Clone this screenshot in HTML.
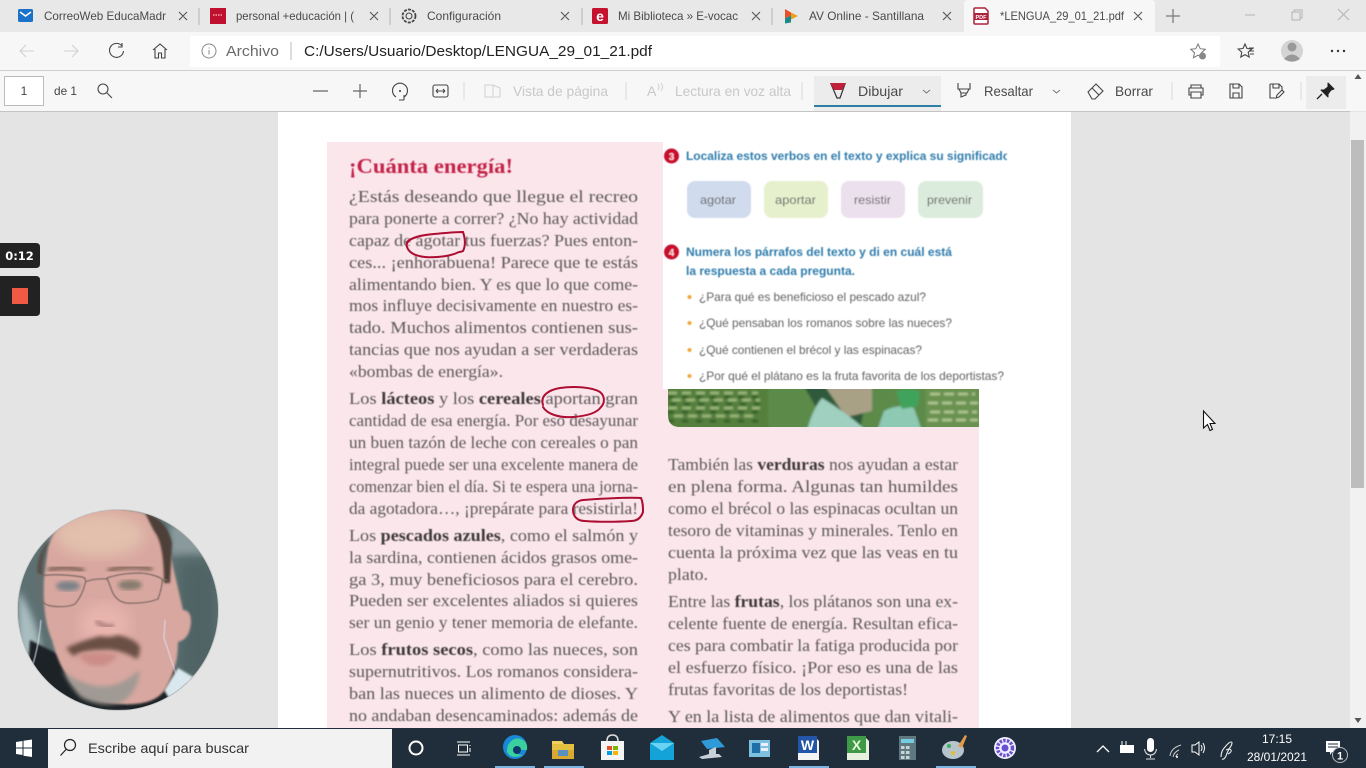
<!DOCTYPE html>
<html lang="es"><head><meta charset="utf-8"><title>LENGUA_29_01_21.pdf</title>
<style>
html,body{margin:0;padding:0;width:1366px;height:768px;overflow:hidden;background:#e4e4e4}
svg{position:absolute;left:0;top:0}
text{font-family:"Liberation Sans",sans-serif}
.ui{font-size:12px;fill:#4a4a4a}
.tb{font-size:14px;fill:#4a4a4a}
.dis{font-size:14px;fill:#c8c8c8}
.s{font-family:"Liberation Serif",serif;font-size:16.5px;fill:#5c5659}
.s tspan{font-weight:bold;fill:#3c383a}
.ti{font-family:"Liberation Serif",serif;font-size:21px;font-weight:bold;fill:#c4224a}
.q{font-size:12px;fill:#626262}
.h{font-size:12px;font-weight:bold;fill:#2f7cab}
.ic{fill:none;stroke:#444;stroke-width:1.1}
.di{fill:none;stroke:#d0d0d0;stroke-width:1.1}
.x{stroke:#555;stroke-width:1.1;fill:none}
</style></head><body>
<svg width="1366" height="768" viewBox="0 0 1366 768" xmlns="http://www.w3.org/2000/svg">
<defs>
<filter id="b0"><feGaussianBlur stdDeviation=".2"/></filter>
<filter id="b1"><feGaussianBlur stdDeviation=".45"/></filter>
<filter id="b1b"><feGaussianBlur stdDeviation="1"/></filter>
<filter id="b2"><feGaussianBlur stdDeviation="2.2"/></filter>
<filter id="b3"><feGaussianBlur stdDeviation="3.5"/></filter>
<filter id="b5"><feGaussianBlur stdDeviation="7"/></filter>
<clipPath id="cc"><circle cx="118" cy="610" r="100"/></clipPath>
<clipPath id="cl"><rect x="660" y="140" width="347" height="30"/></clipPath>
<clipPath id="ph"><path d="M668 389H979V427H680Q668 427 668 415Z"/></clipPath>
<clipPath id="pg"><rect x="278" y="112" width="793" height="616"/></clipPath>
</defs>

<!-- tab strip -->
<rect width="1366" height="32" fill="#e8e8e8"/>
<path d="M964 32V4Q964 0 968 0H1151Q1155 0 1155 4V32Z" fill="#f7f7f7"/>
<g stroke="#b5b5b5"><path d="M199 8V25M390 8V25M582 8V25M772 8V25"/></g>
<!-- tab icons -->
<rect x="18" y="9" width="15" height="13" rx="1.500" fill="#1a73c8"/><path d="M20 12l5.500 4 5.500-4" stroke="#fff" stroke-width="1.600" fill="none"/>
<rect x="210" y="8" width="16" height="16" fill="#c0102f"/><path d="M213 15h10" stroke="#f2a0a8" stroke-width="1.500" stroke-dasharray="1.500 1"/>
<circle cx="409" cy="16" r="3" class="ic"/><circle cx="409" cy="16" r="6.500" fill="none" stroke="#444" stroke-dasharray="3 1.200" stroke-width="1.800"/>
<rect x="592" y="8" width="16" height="16" rx="1.500" fill="#c4122f"/><text x="600" y="21" text-anchor="middle" font-size="14" font-weight="bold" fill="#fff">e</text>
<path d="M785 9l6 3.500v3l-6 3z" fill="#e8522a"/><path d="M791 12.500l7 3.500-7 3.500z" fill="#e6a020"/><path d="M785 18.500l6-3v7l-6 1z" fill="#1a8a8a"/>
<path d="M975 8h10l3 3v12q0 1-1 1h-12q-1 0-1-1V9q0-1 1-1z" fill="#fff" stroke="#b0203a" stroke-width="1.500"/><rect x="974" y="13" width="14" height="7" fill="#b0203a"/><text x="981" y="19" text-anchor="middle" font-size="5.500" font-weight="bold" fill="#fff">PDF</text>
<text class="ui" x="44" y="20" textLength="122" lengthAdjust="spacingAndGlyphs">CorreoWeb EducaMadr</text>
<text class="ui" x="236" y="20" textLength="118" lengthAdjust="spacingAndGlyphs">personal +educación | (</text>
<text class="ui" x="427" y="20" textLength="74" lengthAdjust="spacingAndGlyphs">Configuración</text>
<text class="ui" x="618" y="20" textLength="120" lengthAdjust="spacingAndGlyphs">Mi Biblioteca » E-vocac</text>
<text class="ui" x="809" y="20" textLength="115" lengthAdjust="spacingAndGlyphs">AV Online - Santillana</text>
<text class="ui" x="1000" y="20" textLength="124" lengthAdjust="spacingAndGlyphs">*LENGUA_29_01_21.pdf</text>
<g class="x"><path d="M179 12l8 8M187 12l-8 8M370 12l8 8M378 12l-8 8M561 12l8 8M569 12l-8 8M752 12l8 8M760 12l-8 8M943 12l8 8M951 12l-8 8M1134 12l8 8M1142 12l-8 8"/></g>
<path d="M1173 9v14M1166 16h14" stroke="#777" stroke-width="1.200"/>
<path d="M1245 15h10" stroke="#b5b5b5"/><rect x="1292" y="12" width="8" height="8" fill="none" stroke="#b5b5b5"/><path d="M1294 12v-2h8v8h-2" fill="none" stroke="#b5b5b5"/><path d="M1338 9l11 11M1349 9l-11 11" stroke="#b5b5b5"/>

<!-- address bar -->
<rect y="32" width="1366" height="39" fill="#f7f7f7"/>
<rect x="190" y="36" width="1030" height="31" fill="#fff"/>
<path d="M20 51h14M26 45l-6 6 6 6" class="di"/>
<path d="M64 51h14M72 45l6 6-6 6" class="di"/>
<path d="M122 46a7 7 0 1 0 1.500 5M122 43v4h-4" class="ic"/>
<path d="M153 50l7-6 7 6M155 49v9h3.500v-5h3v5h3.500v-9" class="ic"/>
<circle cx="209" cy="51" r="7" fill="none" stroke="#888"/><path d="M209 47.500v1M209 50v4.500" stroke="#888"/>
<text x="226" y="56" font-size="15" fill="#6a6a6a" textLength="53" lengthAdjust="spacingAndGlyphs">Archivo</text>
<path d="M291 42v18" stroke="#bbb"/>
<text x="304" y="56" font-size="15" fill="#222" textLength="348" lengthAdjust="spacingAndGlyphs">C:/Users/Usuario/Desktop/LENGUA_29_01_21.pdf</text>
<path d="M1198 44l2.200 4.700 5 .6-3.700 3.400 1 5-4.500-2.500-4.500 2.500 1-5-3.700-3.400 5-.6z" fill="none" stroke="#777" stroke-width="1"/><circle cx="1202.500" cy="56" r="3.500" fill="#888"/>
<path d="M1245 44l2 4.500 4.800.5-3.600 3.200 1 4.800-4.200-2.400-4.200 2.400 1-4.800-3.600-3.200 4.800-.5z" class="ic"/><path d="M1249 51h5M1250 54h4M1249 48h5" stroke="#444"/>
<circle cx="1292" cy="51" r="11" fill="#d4d4d4"/><circle cx="1292" cy="47" r="4.500" fill="#999"/><path d="M1284 59q8-9 16 0q-8 5-16 0z" fill="#999"/>
<g fill="#333"><circle cx="1332" cy="51" r="1.200"/><circle cx="1338" cy="51" r="1.200"/><circle cx="1344" cy="51" r="1.200"/></g>
<rect y="70" width="1366" height="1" fill="#cfcfcf"/>

<!-- pdf toolbar -->
<rect y="71" width="1366" height="40" fill="#f7f7f7"/>
<rect y="111" width="1350" height="1" fill="#c4c4c4"/>
<rect x="4.500" y="76.500" width="39" height="29" fill="#fff" stroke="#bbb"/>
<text x="24" y="95" text-anchor="middle" font-size="12" fill="#444">1</text>
<text x="54" y="95" font-size="12" fill="#444" textLength="23" lengthAdjust="spacingAndGlyphs">de 1</text>
<circle cx="103" cy="89" r="5" class="ic"/><path d="M107 93l5 5" class="ic"/>
<path d="M313 91h15M353 91h14M360 84v14" stroke="#666" stroke-width="1.200"/>
<path d="M396 97a7.500 7.500 0 1 1 8 0M404 95v5M399 100h5" class="ic"/><circle cx="400" cy="91" r="1" fill="#333"/>
<rect x="433" y="85" width="15" height="12" rx="2" class="ic"/><path d="M436 91h9M436 91l2-2M436 91l2 2M445 91l-2-2M445 91l-2 2" stroke="#444"/>
<path d="M464 82v18M626 82v18M802 82v18M1172 82v18M1301 82v18" stroke="#d8d8d8"/>
<rect x="485" y="85" width="8" height="12" fill="none" stroke="#d0d0d0"/><path d="M493 85l7 3v9h-7" fill="none" stroke="#d0d0d0"/>
<text class="dis" x="513" y="96" textLength="95" lengthAdjust="spacingAndGlyphs">Vista de página</text>
<text x="647" y="96" font-size="14" fill="#c8c8c8">A</text><path d="M658 84q2 3 0 6M661 83q3 4 0 8" stroke="#d0d0d0" fill="none"/>
<text class="dis" x="675" y="96" textLength="116" lengthAdjust="spacingAndGlyphs">Lectura en voz alta</text>
<rect x="814" y="76" width="127" height="35" fill="#ececec"/><rect x="814" y="105" width="127" height="2" fill="#2f7ea5"/>
<path d="M831 84h14l-5 14h-3z" fill="none" stroke="#333" stroke-width="1.200"/><path d="M830 83h16l-4 7h-8z" fill="#c0203a"/>
<text class="tb" x="858" y="96" textLength="45" lengthAdjust="spacingAndGlyphs">Dibujar</text>
<path d="M923 90l3.500 3 3.500-3" fill="none" stroke="#777"/>
<path d="M958 83v6h12v-6M959 89l2 4h6l2-4M961 93v4l5-2v-2" class="ic"/>
<text class="tb" x="984" y="96" textLength="49" lengthAdjust="spacingAndGlyphs">Resaltar</text>
<path d="M1053 90l3.500 3 3.500-3" fill="none" stroke="#777"/>
<path d="M1088 92l8-8 7 7-8 8h-3z M1092 88l7 7" class="ic"/>
<text class="tb" x="1115" y="96" textLength="38" lengthAdjust="spacingAndGlyphs">Borrar</text>
<path d="M1191 88v-3h10v3M1191 95h-2v-7h14v7h-2M1191 92h10v6h-10z" class="ic"/>
<path d="M1230 84h9l3 3v11h-12zM1233 84v4h6v-4M1233 98v-5h6v5" class="ic"/>
<path d="M1270 84h9l3 3v4M1270 84v14h5M1273 84v4h6v-4M1276 98l1-3 5-5 2 2-5 5z" class="ic"/>
<rect x="1306" y="76" width="40" height="33" fill="#ececec"/>
<path d="M1328 83l6 6-3 1-3 4v3l-7-7h3l4-3z" fill="#222" stroke="#222" stroke-linejoin="round"/><path d="M1322 94l-5 5" stroke="#222" stroke-width="1.300"/>

<!-- pdf page -->
<rect x="278" y="112" width="793" height="616" fill="#fff"/>
<g clip-path="url(#pg)">
<rect x="327" y="142" width="336" height="600" fill="#fbe7eb"/>
<rect x="663" y="389" width="316" height="350" fill="#fbe7eb"/>
<!-- photo -->
<g clip-path="url(#ph)"><g filter="url(#b1b)">
<rect x="664" y="385" width="320" height="46" fill="#5c8a48"/>
<rect x="664" y="385" width="104" height="46" fill="#557f3e"/>
<path d="M668 393h90M672 400h88M668 408h92M674 416h84" stroke="#a2bd7e" stroke-width="2.500" stroke-dasharray="9 5"/>
<path d="M668 397h95M670 404h90M668 412h90M668 421h95" stroke="#2f5a28" stroke-width="2.500" stroke-dasharray="6 8"/>
<path d="M803 385h65l-8 46h-30z" fill="#2d5a3a"/>
<path d="M824 385h48v26l-26 6z" fill="#a9a186"/>
<path d="M822 398q25 15 45 33h-60q5-21 15-33z" fill="#9fd0c0"/>
<path d="M884 411q15-8 30-3l8 23h-45z" fill="#8ec9b4"/>
<path d="M896 392q10-6 24 0l-2 14-16 3z" fill="#3fa35c"/>
<rect x="925" y="385" width="59" height="46" fill="#69914f"/>
<path d="M930 394h45M928 403h50M930 412h47M928 420h50" stroke="#b7cc98" stroke-width="2.500" stroke-dasharray="10 4"/>
</g></g>
<g filter="url(#b1)">
<text class="ti" x="349" y="173" textLength="164" lengthAdjust="spacingAndGlyphs">¡Cuánta energía!</text>
<text class="s" x="349" y="202" textLength="289" lengthAdjust="spacingAndGlyphs">¿Estás deseando que llegue el recreo</text>
<text class="s" x="349" y="224" textLength="289" lengthAdjust="spacingAndGlyphs">para ponerte a correr? ¿No hay actividad</text>
<text class="s" x="349" y="246" textLength="289" lengthAdjust="spacingAndGlyphs">capaz de agotar tus fuerzas? Pues enton-</text>
<text class="s" x="349" y="268" textLength="289" lengthAdjust="spacingAndGlyphs">ces... ¡enhorabuena! Parece que te estás</text>
<text class="s" x="349" y="290" textLength="289" lengthAdjust="spacingAndGlyphs">alimentando bien. Y es que lo que come-</text>
<text class="s" x="349" y="311" textLength="289" lengthAdjust="spacingAndGlyphs">mos influye decisivamente en nuestro es-</text>
<text class="s" x="349" y="333" textLength="289" lengthAdjust="spacingAndGlyphs">tado. Muchos alimentos contienen sus-</text>
<text class="s" x="349" y="355" textLength="289" lengthAdjust="spacingAndGlyphs">tancias que nos ayudan a ser verdaderas</text>
<text class="s" x="349" y="377" textLength="154" lengthAdjust="spacingAndGlyphs">«bombas de energía».</text>
<text class="s" x="349" y="404" textLength="289" lengthAdjust="spacingAndGlyphs">Los <tspan>lácteos</tspan> y los <tspan>cereales</tspan> aportan gran</text>
<text class="s" x="349" y="426" textLength="289" lengthAdjust="spacingAndGlyphs">cantidad de esa energía. Por eso desayunar</text>
<text class="s" x="349" y="448" textLength="289" lengthAdjust="spacingAndGlyphs">un buen tazón de leche con cereales o pan</text>
<text class="s" x="349" y="470" textLength="289" lengthAdjust="spacingAndGlyphs">integral puede ser una excelente manera de</text>
<text class="s" x="349" y="492" textLength="289" lengthAdjust="spacingAndGlyphs">comenzar bien el día. Si te espera una jorna-</text>
<text class="s" x="349" y="514" textLength="289" lengthAdjust="spacingAndGlyphs">da agotadora…, ¡prepárate para resistirla!</text>
<text class="s" x="349" y="541" textLength="289" lengthAdjust="spacingAndGlyphs">Los <tspan>pescados azules</tspan>, como el salmón y</text>
<text class="s" x="349" y="563" textLength="289" lengthAdjust="spacingAndGlyphs">la sardina, contienen ácidos grasos ome-</text>
<text class="s" x="349" y="585" textLength="289" lengthAdjust="spacingAndGlyphs">ga 3, muy beneficiosos para el cerebro.</text>
<text class="s" x="349" y="606" textLength="289" lengthAdjust="spacingAndGlyphs">Pueden ser excelentes aliados si quieres</text>
<text class="s" x="349" y="628" textLength="289" lengthAdjust="spacingAndGlyphs">ser un genio y tener memoria de elefante.</text>
<text class="s" x="349" y="655" textLength="289" lengthAdjust="spacingAndGlyphs">Los <tspan>frutos secos</tspan>, como las nueces, son</text>
<text class="s" x="349" y="677" textLength="289" lengthAdjust="spacingAndGlyphs">supernutritivos. Los romanos considera-</text>
<text class="s" x="349" y="699" textLength="289" lengthAdjust="spacingAndGlyphs">ban las nueces un alimento de dioses. Y</text>
<text class="s" x="349" y="721" textLength="289" lengthAdjust="spacingAndGlyphs">no andaban desencaminados: además de</text>

<text class="s" x="668" y="470" textLength="290" lengthAdjust="spacingAndGlyphs">También las <tspan>verduras</tspan> nos ayudan a estar</text>
<text class="s" x="668" y="492" textLength="290" lengthAdjust="spacingAndGlyphs">en plena forma. Algunas tan humildes</text>
<text class="s" x="668" y="514" textLength="290" lengthAdjust="spacingAndGlyphs">como el brécol o las espinacas ocultan un</text>
<text class="s" x="668" y="536" textLength="290" lengthAdjust="spacingAndGlyphs">tesoro de vitaminas y minerales. Tenlo en</text>
<text class="s" x="668" y="558" textLength="290" lengthAdjust="spacingAndGlyphs">cuenta la próxima vez que las veas en tu</text>
<text class="s" x="668" y="580" textLength="40" lengthAdjust="spacingAndGlyphs">plato.</text>
<text class="s" x="668" y="607" textLength="290" lengthAdjust="spacingAndGlyphs">Entre las <tspan>frutas</tspan>, los plátanos son una ex-</text>
<text class="s" x="668" y="629" textLength="290" lengthAdjust="spacingAndGlyphs">celente fuente de energía. Resultan efica-</text>
<text class="s" x="668" y="651" textLength="290" lengthAdjust="spacingAndGlyphs">ces para combatir la fatiga producida por</text>
<text class="s" x="668" y="673" textLength="290" lengthAdjust="spacingAndGlyphs">el esfuerzo físico. ¡Por eso es una de las</text>
<text class="s" x="668" y="695" textLength="240" lengthAdjust="spacingAndGlyphs">frutas favoritas de los deportistas!</text>
<text class="s" x="668" y="722" textLength="290" lengthAdjust="spacingAndGlyphs">Y en la lista de alimentos que dan vitali-</text>

<circle cx="671.500" cy="156" r="7.500" fill="#c8112e"/><text x="671.500" y="160" text-anchor="middle" font-size="10" font-weight="bold" fill="#fdd">3</text>
<circle cx="671.500" cy="252" r="7.500" fill="#c8112e"/><text x="671.500" y="256" text-anchor="middle" font-size="10" font-weight="bold" fill="#fdd">4</text>
<g clip-path="url(#cl)"><text class="h" x="686" y="160" textLength="324" lengthAdjust="spacingAndGlyphs">Localiza estos verbos en el texto y explica su significado</text></g>
<rect x="687" y="181" width="64" height="37" rx="8" fill="#d0dcee"/>
<rect x="764" y="181" width="64" height="37" rx="8" fill="#e7f0cd"/>
<rect x="841" y="181" width="64" height="37" rx="8" fill="#ecdfee"/>
<rect x="918" y="181" width="65" height="37" rx="8" fill="#dcecdc"/>
<text class="q" x="700" y="204" textLength="36" lengthAdjust="spacingAndGlyphs">agotar</text>
<text class="q" x="775" y="204" textLength="41" lengthAdjust="spacingAndGlyphs">aportar</text>
<text class="q" x="854" y="204" textLength="37" lengthAdjust="spacingAndGlyphs">resistir</text>
<text class="q" x="927" y="204" textLength="45" lengthAdjust="spacingAndGlyphs">prevenir</text>
<text class="h" x="686" y="256" textLength="266" lengthAdjust="spacingAndGlyphs">Numera los párrafos del texto y di en cuál está</text>
<text class="h" x="686" y="275" textLength="169" lengthAdjust="spacingAndGlyphs">la respuesta a cada pregunta.</text>
<g fill="#f0a83c"><circle cx="689.500" cy="297" r="2"/><circle cx="689.500" cy="323" r="2"/><circle cx="689.500" cy="350" r="2"/><circle cx="689.500" cy="376" r="2"/></g>
<text class="q" x="699" y="301" textLength="227" lengthAdjust="spacingAndGlyphs">¿Para qué es beneficioso el pescado azul?</text>
<text class="q" x="699" y="327" textLength="253" lengthAdjust="spacingAndGlyphs">¿Qué pensaban los romanos sobre las nueces?</text>
<text class="q" x="699" y="354" textLength="223" lengthAdjust="spacingAndGlyphs">¿Qué contienen el brécol y las espinacas?</text>
<text class="q" x="699" y="380" textLength="305" lengthAdjust="spacingAndGlyphs">¿Por qué el plátano es la fruta favorita de los deportistas?</text>
</g>
<!-- annotations -->
<g fill="none" stroke="#ad1030" stroke-width="2" stroke-linecap="round" filter="url(#b0)">
<path d="M407 242c4-4 14-7 27-8 11-1 21-2 29-2 2 6 3 13 0 19-2 1-3 1-4 1-8 4-22 6-34 5-10-1-16-4-18-10-1-3 0-5 4-8"/>
<path d="M543 405c-3-9 5-15 17-17 14-2 32-1 40 4 5 4 5 11 1 15-4 6-14 9-28 10-14 1-26-3-30-10"/>
<path d="M573 510c0-5 3-9 10-10 15-1 40-3 58-2 2 4 2 9 2 14-2 6-6 9-12 9-14 1-34 1-46 0-8 0-12-5-12-11z"/>
</g>
</g>

<!-- scrollbar -->
<rect x="1350" y="112" width="16" height="616" fill="#f1f1f1"/>
<rect x="1351" y="140" width="13" height="348" fill="#bdbdbd"/>
<path d="M1358 74l-3.500 5h7zM1358 723l-3.500-5h7z" fill="#555"/>
<!-- cursor -->
<path d="M1203.500 411v17l4-3.500 2.500 6 2.500-1-2.500-6h5z" fill="#fff" stroke="#111" stroke-width="1.100"/>

<!-- recorder -->
<path d="M0 243h36q4 0 4 4v17q0 4-4 4H0z" fill="#222"/>
<text x="19.500" y="260" text-anchor="middle" font-size="11.500" font-weight="bold" fill="#fff" style="font-family:'DejaVu Sans',sans-serif">0:12</text>
<path d="M0 276h36q4 0 4 4v32q0 4-4 4H0z" fill="#222"/>
<rect x="12" y="288" width="16" height="16" fill="#f05a44"/>

<!-- webcam face -->
<circle cx="118" cy="610" r="101" fill="#c9c9c9"/>
<g clip-path="url(#cc)">
<rect x="18" y="510" width="200" height="200" fill="#5f7475"/>
<rect x="18" y="510" width="45" height="200" fill="#5d7072"/>
<path d="M18 590q20 30 25 70l-25 0z" fill="#a9bcc0" filter="url(#b3)"/>
<rect x="170" y="525" width="48" height="30" fill="#8a9a9c" filter="url(#b3)"/>
<rect x="178" y="560" width="40" height="120" fill="#4f6465" filter="url(#b5)"/>
<path d="M30 640l30 15 75 55H25z" fill="#1f2325" filter="url(#b1b)"/>
<path d="M125 712l18-58 22-15 12 35 12 12-30 28z" fill="#1f2325" filter="url(#b1b)"/>
<path d="M178 668l17 10-25 22-6-10z" fill="#d8e8ee" filter="url(#b1b)"/>
<path d="M168 545q-5-30-34-34l-20-3q-55 0-66 40l-4 30q-2 40 8 62 10 40 33 53 22 13 50 11 26-2 33-20 10-18 10-42 12-3 13-20 0-12-8-12z" fill="#d8a79f" filter="url(#b1b)"/>
<ellipse cx="100" cy="535" rx="45" ry="22" fill="#e2c0ad" filter="url(#b5)"/>
<ellipse cx="105" cy="625" rx="26" ry="22" fill="#e8b4ad" filter="url(#b5)"/>
<path d="M145 513q22 6 27 30l-2 40-6 0q0-40-10-52z" fill="#4d3f39" filter="url(#b1b)"/>
<path d="M50 540q-8 14-8 36l-5-4q0-20 13-32z" fill="#5a5048" filter="url(#b1b)"/>
<path d="M48 570q18-5 36 1M108 571q20-7 44-2" stroke="#7a5f52" stroke-width="4.500" fill="none" filter="url(#b2)"/>
<ellipse cx="68" cy="586" rx="12" ry="5" fill="#7c8288" filter="url(#b2)"/>
<ellipse cx="130" cy="585" rx="12" ry="5" fill="#857c6e" filter="url(#b2)"/>
<path d="M66 648q15-7 34-12 10 2 18-1 18 4 22 12 0 8-3 12-18-11-36-9-18 0-28 6z" fill="#6a4f45" filter="url(#b2)"/>
<path d="M78 655q20-5 40 0-8 11-20 11t-20-11z" fill="#cc8d87" filter="url(#b2)"/>
<path d="M62 670q12 22 20 28 20 10 40 4 16-10 18-32-8 6-14 10-15 8-30 6-20-4-34-16z" fill="#a09a94" filter="url(#b2)"/>
<path d="M96 621q8 7 18 5" stroke="#94686a" stroke-width="3" fill="none" filter="url(#b2)"/>
<g fill="none" stroke="#7b6863" stroke-width="1.200" filter="url(#b1)">
<path d="M37 576q22-3 45 1 5 1 3 7-3 12-10 20-8 4-24 2-10-2-12-10z"/>
<path d="M107 578q15-5 33-5 14 1 22 6 1 6-4 20-12 5-32 4-10-2-14-12z"/>
<path d="M85 582q10-4 22-3M162 580l6 0"/>
</g>
<path d="M41 620q-2 24-8 44M165 620l-1 18 12 36" stroke="#dde" stroke-width="1" fill="none" filter="url(#b1)"/>
</g>

<!-- taskbar -->
<rect y="728" width="1366" height="40" fill="#1f2e3a"/>
<g fill="#fff"><path d="M16 742l6.500-1v6.500H16zM23.500 740.700l8.500-1.200v8H23.500zM16 748.500h6.500v6.500l-6.500-1zM23.500 748.500H32v8.500l-8.500-1.200z"/></g>
<rect x="48" y="729" width="344" height="39" fill="#f2f2f2"/>
<circle cx="70" cy="745" r="5.500" fill="none" stroke="#222" stroke-width="1.200"/><path d="M66 749.500l-5.500 6" stroke="#222" stroke-width="1.200"/>
<text x="88" y="753" font-size="14" fill="#333" textLength="161" lengthAdjust="spacingAndGlyphs">Escribe aquí para buscar</text>
<circle cx="416" cy="748" r="6.500" fill="none" stroke="#fff" stroke-width="2"/>
<g fill="none" stroke="#fff"><path d="M457 742h13M457 755h13"/><rect x="458.500" y="745" width="9" height="7"/><path d="M470 745v1M470 748v4"/></g>
<circle cx="515" cy="747" r="12" fill="#1a88d8"/><path d="M508 745q6-10 15-5 5 3 4 10h-12q1 5 8 5-12 5-16-3 0-5 1-7z" fill="#3ad0a0"/><circle cx="517" cy="750" r="4" fill="#0d3a68"/>
<path d="M552 744h22v14h-22z" fill="#e4c040"/><path d="M552 741h10l2 3h-12z" fill="#f0d060"/><rect x="552" y="750" width="22" height="9" fill="#d8a830"/><rect x="558" y="750" width="10" height="6" fill="#5a90c0"/>
<rect x="601" y="741" width="23" height="19" fill="#f4f4f4"/><path d="M607 741q0-6 5.500-6t5.500 6" fill="none" stroke="#ddd" stroke-width="1.500"/><rect x="607" y="746" width="5" height="4" fill="#e8502a"/><rect x="613" y="746" width="5" height="4" fill="#7ab800"/><rect x="607" y="751" width="5" height="4" fill="#00a0e0"/><rect x="613" y="751" width="5" height="4" fill="#f4b400"/>
<path d="M650 743l12-8 12 8v17h-24z" fill="#14a3d8"/><path d="M650 743l12 8 12-8" fill="#6ad2f2"/>
<path d="M701 741l16-3 8 9-18 2z" fill="#2e9bd8"/><path d="M716 747v7h3l3 3-20 2-3-2 10-3v-4z" fill="#c8d0d8"/>
<rect x="749" y="740" width="21" height="17" fill="#7ec0e0"/><rect x="752" y="743" width="8" height="10" fill="#1f6fa8"/><rect x="761" y="743" width="7" height="3" fill="#eef"/><rect x="761" y="748" width="7" height="3" fill="#eef"/>
<path d="M798 736h16l5 5v19h-21z" fill="#f4f4f4"/><rect x="798" y="736" width="19" height="17" fill="#2356a8"/><text x="807.500" y="750" text-anchor="middle" font-size="14" font-weight="bold" fill="#fff">W</text>
<path d="M847 736h17l5 5v19h-22z" fill="#e8f0e0"/><rect x="847" y="736" width="19" height="17" fill="#3f9a48"/><text x="856.500" y="750" text-anchor="middle" font-size="14" font-weight="bold" fill="#e8f8d8">X</text>
<rect x="899" y="736" width="17" height="24" fill="#607880"/><rect x="901" y="739" width="13" height="4" fill="#74cce0"/><g fill="#c8d4d8"><rect x="901" y="746" width="3.500" height="3"/><rect x="906" y="746" width="3.500" height="3"/><rect x="901" y="751" width="3.500" height="3"/><rect x="906" y="751" width="3.500" height="3"/><rect x="901" y="756" width="3.500" height="3"/><rect x="906" y="756" width="3.500" height="3"/></g>
<ellipse cx="953" cy="750" rx="11" ry="9" fill="#b8c4cc"/><path d="M958 746l7-11 2 1-5 12z" fill="#e09a48"/><circle cx="949" cy="746" r="2" fill="#3ab060"/><circle cx="953" cy="753" r="2" fill="#e0c030"/>
<circle cx="1005" cy="748" r="11" fill="#f0f0ff"/><circle cx="1005" cy="748" r="7.500" fill="none" stroke="#6a50d0" stroke-width="3.500" stroke-dasharray="2.500 1.200"/><circle cx="1005" cy="748" r="3.500" fill="#6a50d0"/>
<g fill="#7bb4e0"><rect x="495" y="766" width="40" height="2"/><rect x="544" y="766" width="40" height="2"/><rect x="789" y="766" width="40" height="2"/><rect x="936" y="766" width="40" height="2"/></g>
<path d="M1097 752l6-6 6 6" fill="none" stroke="#fff" stroke-width="1.300"/>
<rect x="1120" y="745" width="14" height="8" fill="#fff"/><path d="M1122 741v4M1126 741v4" stroke="#fff"/>
<rect x="1147" y="738" width="7" height="14" rx="3.500" fill="#fff"/><path d="M1144.500 749q1 6 6 6t6-6M1150.500 755v3M1146 759h9" stroke="#ddd" fill="none"/>
<path d="M1170 756q1-8 11-11M1173 757q1-5 6-7M1176 757q0-2 2-3" stroke="#ccc" fill="none"/><circle cx="1177" cy="757" r="1" fill="#fff"/>
<path d="M1192 745h3l4-3v13l-4-3h-3z" fill="none" stroke="#fff"/><path d="M1201 745q2 3 0 6M1203 743q3 5 0 10" stroke="#fff" fill="none"/>
<path d="M1221 757q0-6 4-10 4-5 6-5t0 4q-3 4-5 10-2 4-4 3M1226 750q4-2 5 0t-3 4" fill="none" stroke="#eee" stroke-width="1.100"/>
<text x="1277" y="743" text-anchor="middle" font-size="12" fill="#fff">17:15</text>
<text x="1277" y="761" text-anchor="middle" font-size="12" fill="#fff">28/01/2021</text>
<path d="M1326 741h14v11h-8l-2 3v-3h-4z" fill="#fff"/><path d="M1328 744h10M1328 747h10" stroke="#1f2e3a"/>
<circle cx="1340" cy="755" r="7.500" fill="#1f2e3a" stroke="#bbb" stroke-width="1"/><text x="1340" y="759.500" text-anchor="middle" font-size="11" font-weight="bold" fill="#fff">1</text>
</svg>
</body></html>
